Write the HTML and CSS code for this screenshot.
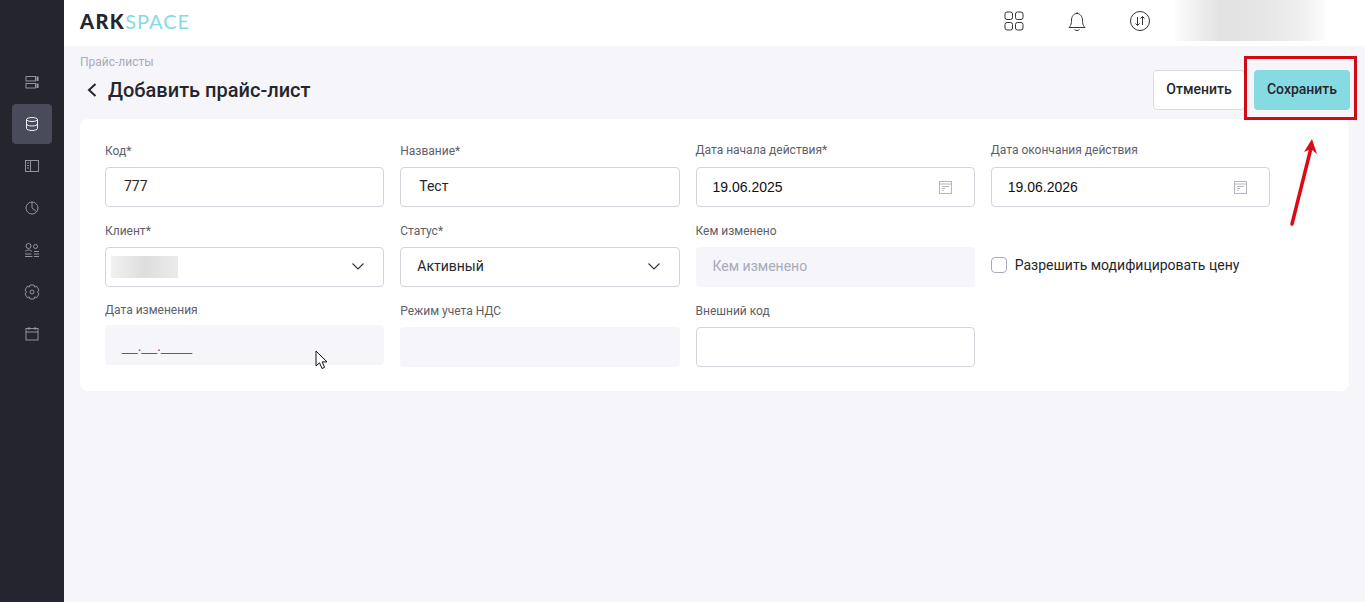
FILE: index.html
```html
<!DOCTYPE html>
<html lang="ru">
<head>
    <meta charset="UTF-8">
    <meta name="viewport" content="width=device-width, initial-scale=1.0">
    <title>Добавить прайс-лист</title>
    <link rel="stylesheet" href="styles.css">
</head>
<body>
    <aside class="sidebar">
        <a class="side-item"><svg viewBox="0 0 16 16"><rect x="2" y="2.500" width="9.500" height="4.500"/><rect x="2" y="9.500" width="9.500" height="4.500"/><path d="M13.500 2.500V7M13.500 9.500V14" stroke-width="2"/></svg></a>
        <a class="side-item active"><svg viewBox="0 0 16 16"><ellipse cx="8" cy="3.500" rx="5.500" ry="2"/><path d="M2.500 3.500v9c0 1.100 2.500 2 5.500 2s5.500-.9 5.500-2v-9M2.500 8c0 1.100 2.500 2 5.500 2s5.500-.9 5.500-2"/></svg></a>
        <a class="side-item"><svg viewBox="0 0 16 16"><rect x="1.500" y="2.500" width="13" height="11"/><path d="M6.500 2.500v11M3 5h2M3 7.500h2M3 10h2"/></svg></a>
        <a class="side-item"><svg viewBox="0 0 16 16"><circle cx="8" cy="8" r="6"/><path d="M8 2v6l4.500 3.500"/></svg></a>
        <a class="side-item"><svg viewBox="0 0 16 16"><circle cx="4.500" cy="4" r="2.500"/><circle cx="11.500" cy="4.500" r="2"/><path d="M1 9.500c1-1 2.500-1.500 3.500-1.500s2.500.5 3.500 1.500M1 14.500h7.500M1 12h6.500M10 9.500h5M10 12h5M10 14.500h5"/></svg></a>
        <a class="side-item"><svg viewBox="0 0 16 16"><path d="M6 1h4l.6 2 2-.7L15 6l-1.500 2 1.500 2-2.400 3.700-2-.7-.6 2H6l-.6-2-2 .7L1 10l1.500-2L1 6l2.400-3.700 2 .7z"/><circle cx="8" cy="8" r="2"/></svg></a>
        <a class="side-item"><svg viewBox="0 0 16 16"><rect x="2" y="2.500" width="12" height="11.500"/><path d="M2 6h12M5 1v3M11 1v3"/></svg></a>
    </aside>

    <div class="main">
        <header class="topbar">
            <div class="logo"><span class="logo-dark">ARK</span><span class="logo-light">SPACE</span></div>
            <div class="top-icons">
                <svg class="top-icon" viewBox="0 0 24 24"><rect x="3" y="3" width="7.500" height="7.500" rx="2"/><rect x="13.500" y="3" width="7.500" height="7.500" rx="2"/><rect x="3" y="13.500" width="7.500" height="7.500" rx="2"/><rect x="13.500" y="13.500" width="7.500" height="7.500" rx="2"/></svg>
                <svg class="top-icon" viewBox="0 0 24 24"><path d="M4 18.500c1.500-1.500 2.500-3 2.500-7.500 0-3.500 2.300-6.500 5.500-6.500s5.500 3 5.500 6.500c0 4.500 1 6 2.500 7.500zM9.500 20.500c1.200 1.300 3.800 1.300 5 0M12 3v1.500"/></svg>
                <svg class="top-icon" viewBox="0 0 24 24"><circle cx="12" cy="12" r="9.500"/><path d="M9.500 8v8.500M7.500 14.500l2 2 2-2M14.500 16V7.500M12.500 9.500l2-2 2 2"/></svg>
            </div>
            <div class="user-blur"></div>
        </header>

        <main class="content">
            <div class="breadcrumb">Прайс-листы</div>
            <div class="page-head">
                <h1 class="page-title">
                    <svg class="back-icon" viewBox="0 0 12 16"><path d="M9.500 2 3 8l6.500 6"/></svg>
                    Добавить прайс-лист
                </h1>
                <div class="actions">
                    <button class="btn btn-cancel">Отменить</button>
                    <button class="btn btn-save">Сохранить</button>
                </div>
            </div>

            <form class="card">
                <div class="field">
                    <label class="field-label">Код*</label>
                    <div class="input input-code">777</div>
                </div>
                <div class="field">
                    <label class="field-label">Название*</label>
                    <div class="input input-name">Тест</div>
                </div>
                <div class="field field-up">
                    <label class="field-label">Дата начала действия*</label>
                    <div class="input input-date">
                        <span>19.06.2025</span>
                        <svg class="cal-icon" viewBox="0 0 13 13"><rect x=".5" y=".5" width="12" height="12"/><path d="M.5 3h12M3 5.500h7M3 7.500h3M3 9.500h1.500"/></svg>
                    </div>
                </div>
                <div class="field field-up">
                    <label class="field-label">Дата окончания действия</label>
                    <div class="input input-date">
                        <span>19.06.2026</span>
                        <svg class="cal-icon" viewBox="0 0 13 13"><rect x=".5" y=".5" width="12" height="12"/><path d="M.5 3h12M3 5.500h7M3 7.500h3M3 9.500h1.500"/></svg>
                    </div>
                </div>

                <div class="field">
                    <label class="field-label">Клиент*</label>
                    <div class="input input-select input-client">
                        <span class="client-blur"></span>
                        <svg class="chevron" viewBox="0 0 12 7"><path d="M.5.500 6 6l5.500-5.500"/></svg>
                    </div>
                </div>
                <div class="field">
                    <label class="field-label">Статус*</label>
                    <div class="input input-select">
                        <span>Активный</span>
                        <svg class="chevron" viewBox="0 0 12 7"><path d="M.5.500 6 6l5.500-5.500"/></svg>
                    </div>
                </div>
                <div class="field">
                    <label class="field-label">Кем изменено</label>
                    <div class="input input-disabled input-placeholder">Кем изменено</div>
                </div>
                <div class="check-field">
                    <span class="checkbox"></span>
                    <span class="check-text">Разрешить модифицировать цену</span>
                </div>

                <div class="field field-tight field-up">
                    <label class="field-label">Дата изменения</label>
                    <div class="input input-disabled input-mask">__.__.____</div>
                </div>
                <div class="field">
                    <label class="field-label">Режим учета НДС</label>
                    <div class="input input-disabled"></div>
                </div>
                <div class="field">
                    <label class="field-label">Внешний код</label>
                    <div class="input"></div>
                </div>
            </form>
        </main>
    </div>

    <!-- пометки поверх скриншота -->
    <div class="mark-box"></div>
    <svg class="mark-arrow" viewBox="0 0 40 100"><path d="M7 92 26 16" stroke="#dc0a14" stroke-width="3.500" stroke-linecap="round" fill="none"/><path d="M27 7 19 20 26 17 32 22z" fill="#dc0a14"/></svg>
    <svg class="cursor" viewBox="0 0 14 20"><path d="M1 1v15l3.500-3.200 2.500 5.700 2.600-1.100-2.500-5.500H12z" fill="#fff" stroke="#111" stroke-width="1"/></svg>
</body>
</html>
```

FILE: styles.css
```css
* {
    box-sizing: border-box;
}
html, body {
    height: 100%;
}
body {
    margin: 0;
    display: flex;
    overflow: hidden;
    font-family: Roboto, Arial, sans-serif;
    background: #f5f5fa;
    color: #25262d;
}

/* боковое меню */
.sidebar {
    width: 64px;
    flex-shrink: 0;
    background: #25262d;
    padding-top: 62px;
    display: flex;
    flex-direction: column;
    align-items: center;
    gap: 2px;
}
.side-item {
    width: 40px;
    height: 40px;
    border-radius: 4px;
    display: flex;
    align-items: center;
    justify-content: center;
}
.side-item svg {
    width: 16px;
    height: 16px;
    fill: none;
    stroke: #9d9fac;
    stroke-width: .9;
}
.side-item.active {
    background: #4a4b5a;
}
.side-item.active svg {
    stroke: #fff;
}

.main {
    flex: 1;
    min-width: 0;
}

/* шапка */
.topbar {
    height: 46px;
    background: #fff;
    display: flex;
    align-items: flex-start;
    padding-left: 16px;
    overflow: hidden;
}
.logo {
    font-family: Lato, Arial, sans-serif;
    font-size: 20px;
    line-height: 42px;
    white-space: nowrap;
}
.logo-dark {
    font-weight: 900;
    color: #25262d;
    letter-spacing: 1.400px;
}
.logo-light {
    font-weight: 400;
    color: #86dbe2;
    letter-spacing: 1px;
}
.top-icons {
    margin-left: auto;
    display: flex;
    gap: 39px;
    padding-top: 9px;
}
.top-icon {
    width: 24px;
    height: 24px;
    fill: none;
    stroke: #33343b;
    stroke-width: 1;
}
.user-blur {
    width: 150px;
    height: 41px;
    margin: 0 40px 0 23px;
    background: linear-gradient(90deg, #fcfcfc, #e2e2e2 30%, #e6e6e6 60%, #f0f0f0 85%, #fcfcfc);
}

/* контент */
.content {
    padding: 8px 15px 0 16px;
}
.breadcrumb {
    font-size: 12px;
    line-height: 16px;
    color: #a9abb8;
}
.page-head {
    height: 40px;
    display: flex;
    align-items: center;
    justify-content: space-between;
}
.page-title {
    margin: 0;
    font-size: 20px;
    font-weight: 500;
    display: flex;
    align-items: center;
    gap: 10px;
}
.back-icon {
    width: 12px;
    height: 16px;
    margin-left: 6px;
    fill: none;
    stroke: #25262d;
    stroke-width: 2;
}
.actions {
    display: flex;
    gap: 9px;
}
.btn {
    height: 40px;
    padding: 0 0 2px;
    border-radius: 4px;
    font-family: Roboto, Arial, sans-serif;
    font-size: 14px;
    font-weight: 500;
    color: #25262d;
    cursor: pointer;
}
.btn-cancel {
    width: 92px;
    background: #fff;
    border: 1px solid #dcdde3;
}
.btn-save {
    width: 96px;
    background: #86dbe2;
    border: none;
}

/* форма */
.card {
    margin: 9px 1px 0 0;
    height: 272px;
    background: #fff;
    border-radius: 8px;
    padding: 24px 79px 0 25px;
    display: grid;
    grid-template-columns: repeat(4, 1fr);
    column-gap: 16px;
    row-gap: 16px;
    align-content: start;
}
.field-label {
    display: block;
    font-size: 12px;
    line-height: 16px;
    color: #5d5f6b;
    margin-bottom: 8px;
}
.field-up .field-label {
    position: relative;
    top: -1px;
}
.field-tight .field-label {
    margin-bottom: 6px;
}
.input {
    height: 40px;
    border: 1px solid #d3d4dc;
    border-radius: 4px;
    background: #fff;
    display: flex;
    align-items: center;
    justify-content: space-between;
    padding: 0 16px 2px;
    font-size: 14px;
    color: #25262d;
}
.input-code {
    padding-left: 18px;
}
.input-name {
    padding-left: 18px;
}
.input-date {
    font-family: "Liberation Sans", Arial, sans-serif;
    color: #111;
    padding: 0 22px 0 16px;
}
.input-select {
    padding-right: 19px;
}
.input-client {
    padding-left: 5px;
}
.input-disabled {
    background: #f5f5fa;
    border-color: #f5f5fa;
}
.input-placeholder {
    color: #a9abb8;
}
.input-mask {
    padding-top: 4px;
    font-family: "Liberation Sans", Arial, sans-serif;
    font-size: 14px;
    color: #5d5f6b;
}
.client-blur {
    width: 67px;
    height: 22px;
    margin-top: 2px;
    background: linear-gradient(90deg, #f1f1f1, #dedede 50%, #ebebeb);
}
.chevron {
    width: 12px;
    height: 7px;
    fill: none;
    stroke: #33343b;
    stroke-width: 1.100;
}
.cal-icon {
    width: 13px;
    height: 13px;
    fill: none;
    stroke: #b4b5c0;
    stroke-width: 1;
}
.check-field {
    display: flex;
    align-items: center;
    gap: 8px;
    padding-top: 20px;
}
.checkbox {
    width: 16px;
    height: 16px;
    border: 1px solid #a9abb8;
    border-radius: 4px;
}
.check-text {
    font-size: 14px;
    color: #25262d;
}

/* пометки */
.mark-box {
    position: absolute;
    left: 1244px;
    top: 56px;
    width: 113px;
    height: 64px;
    border: 3px solid #d20a14;
}
.mark-arrow {
    position: absolute;
    left: 1285px;
    top: 132px;
    width: 40px;
    height: 100px;
}
.cursor {
    position: absolute;
    left: 315px;
    top: 350px;
    width: 14px;
    height: 20px;
}
```
